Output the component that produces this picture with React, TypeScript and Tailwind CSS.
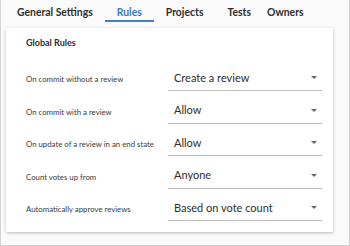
import React from 'react';

const tabs = ['General Settings', 'Rules', 'Projects', 'Tests', 'Owners'];

const rules = [
  { label: 'On commit without a review', value: 'Create a review' },
  { label: 'On commit with a review', value: 'Allow' },
  { label: 'On update of a review in an end state', value: 'Allow' },
  { label: 'Count votes up from', value: 'Anyone' },
  { label: 'Automatically approve reviews', value: 'Based on vote count' },
];

const App = () => {
  return (
    <div
      className="w-[350px] h-[246px] bg-[#fafafa] border-x border-b border-[#d2d2d2] overflow-hidden"
      style={{ fontFamily: 'Lato, "Open Sans", sans-serif' }}
    >
      <div className="flex pl-[4px] pt-[4px]">
        {tabs.map((tab) => (
          <div
            key={tab}
            className={
              tab === 'Rules'
                ? 'px-3 text-[10.4px] font-bold text-[#3d78c2] border-b-2 border-[#4a7fc4] leading-[16px]'
                : tab === 'Owners'
                ? 'pl-[4px] pr-3 text-[10.4px] font-bold text-[#2e2e2e] leading-[16px] border-b-2 border-transparent'
                : 'px-3 text-[10.4px] font-bold text-[#2e2e2e] leading-[16px] border-b-2 border-transparent'
            }
          >
            {tab}
          </div>
        ))}
      </div>

      <div className="ml-[5px] mt-[6px] w-[327px] h-[204px] bg-white shadow-[0_1px_3px_rgba(0,0,0,0.25)] pl-[20px] pr-[11px] pt-[8px]">
        <h3 className="text-[9px] font-bold text-[#2e2e2e] leading-[14px]">Global Rules</h3>

        <div className="mt-[12px] flex flex-col">
          {rules.map((rule) => (
            <div key={rule.label} className="flex items-center h-[32.5px]">
              <div className="w-[142px] text-[7.8px] text-[#3a3a3a] pt-[4px]">{rule.label}</div>
              <div className="flex-1 h-[26px] flex items-center justify-between border-b border-[#bdbdbd] pl-[6px] pr-[5px]">
                <span className="text-[11px] text-[#2e2e2e]">{rule.value}</span>
                <span className="w-0 h-0 border-l-[3px] border-r-[3px] border-t-[3px] border-l-transparent border-r-transparent border-t-[#666]" />
              </div>
            </div>
          ))}
        </div>
      </div>
    </div>
  );
};

export default App;
